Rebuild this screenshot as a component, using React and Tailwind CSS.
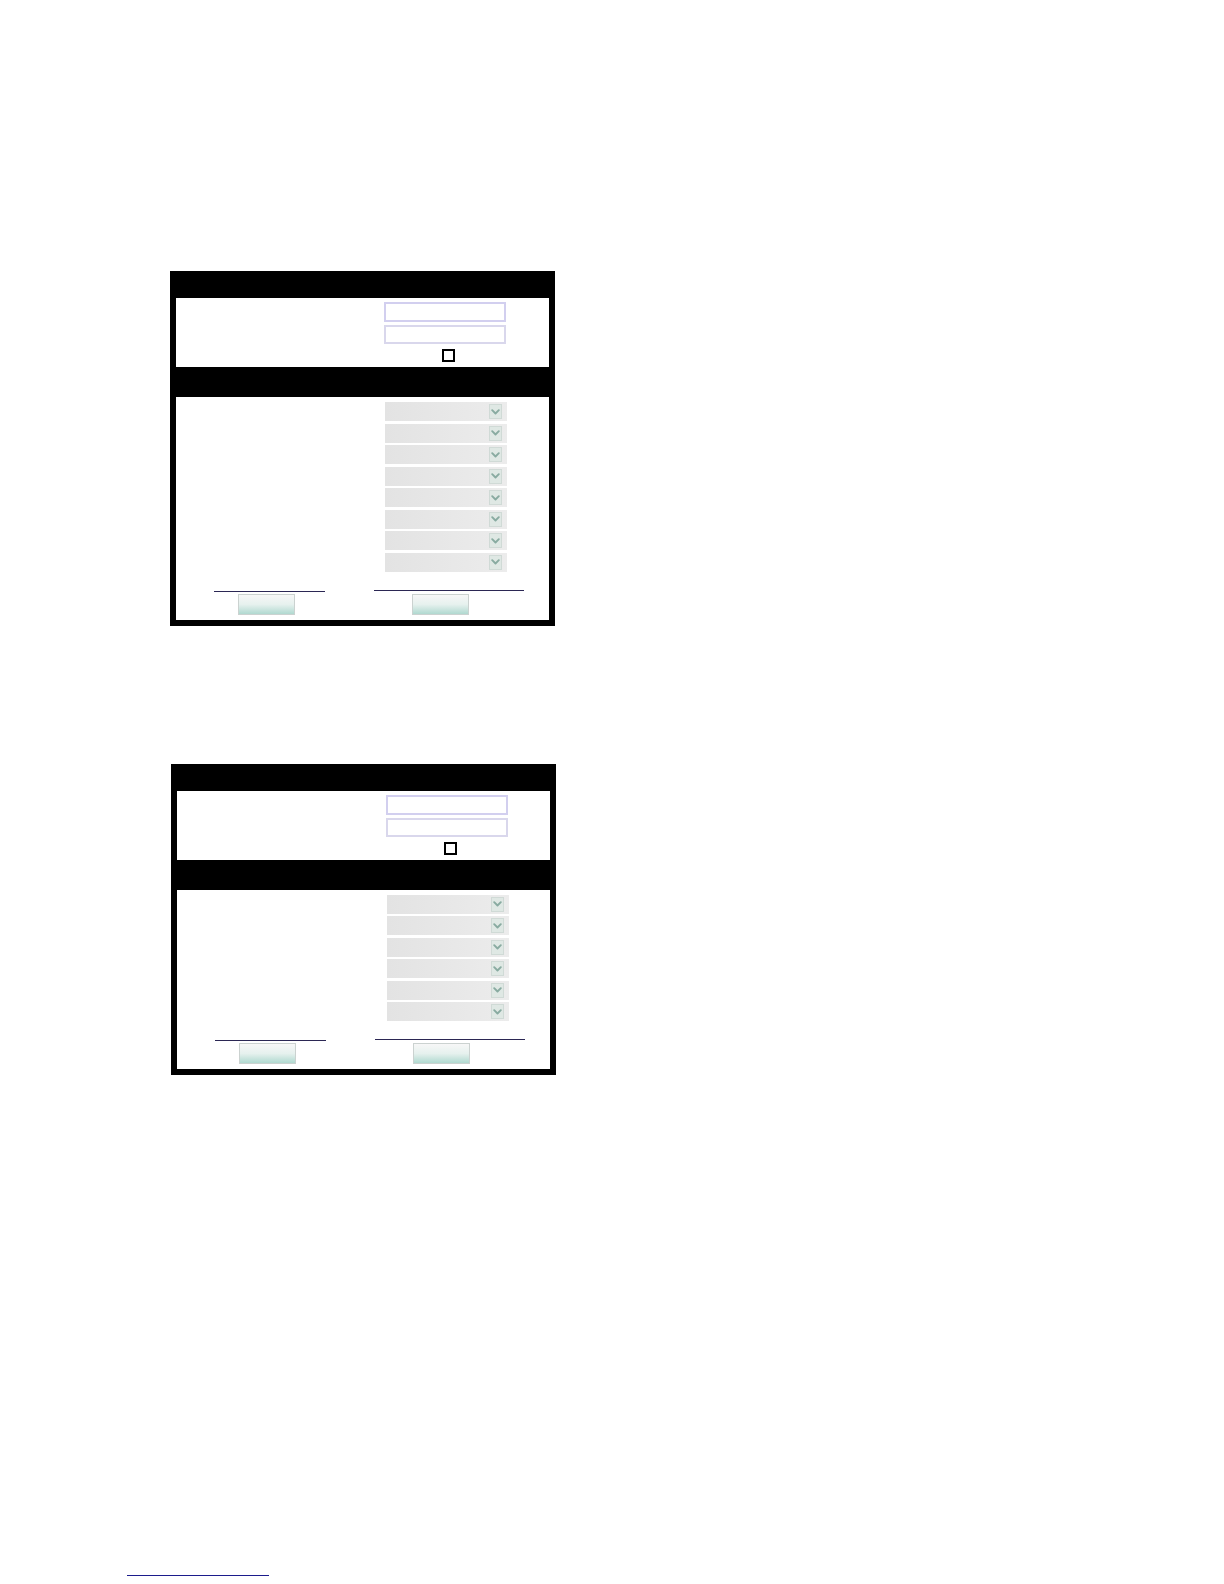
import React from 'react';

const Chevron = () => (
  <svg width="9" height="6" viewBox="0 0 9 6" fill="none">
    <path d="M1.2 1.2 L4.5 4.5 L7.8 1.2" stroke="#89aba1" strokeWidth="1.9" strokeLinecap="round" strokeLinejoin="round" />
  </svg>
);

function Select() {
  return (
    <div className="h-[19px] w-[122px] flex items-center justify-end pr-[5px] bg-linear-to-r from-[#e3e3e3] to-[#ececec]">
      <div className="w-[13px] h-[15px] flex items-center justify-center bg-[#dfe8e4] border border-[#d0dad6]">
        <Chevron />
      </div>
    </div>
  );
}

function Button() {
  return <div className="h-[21px] w-[57px] border border-[#cbd2d0] bg-linear-to-b from-[#f7f7f7] via-[#e6f1ee] to-[#b0d9d0]" />;
}

function Panel({ selects, ml, shift = 0 }) {
  return (
    <div className={`${ml} w-[385px] bg-black pt-[27px] px-[6px] pb-[6px]`}>
      <div className="bg-white h-[69px] flex flex-col pt-[4px]" style={{ paddingLeft: 208 + shift }}>
        <div className="h-[20px] w-[122px] border-2 border-[#d2cfef]" />
        <div className="h-[19px] w-[122px] mt-[3px] border-2 border-[#d9d7ec]" />
        <div className="w-[13px] h-[13px] mt-[5px] ml-[58px] border-2 border-black bg-white" />
      </div>
      <div className="h-[30px]" />
      <div className="bg-white flex flex-col pt-[5px] pb-[5px]">
        <div className="flex flex-col gap-[2.5px]" style={{ paddingLeft: 209 + shift }}>
          {Array.from({ length: selects }).map((_, i) => (
            <Select key={i} />
          ))}
        </div>
        <div className="flex items-end mt-[18px]">
          <div className="ml-[38px] w-[111px] flex flex-col">
            <div className="h-px bg-[#2b2754]" />
            <div className="ml-[24px] mt-[2px]"><Button /></div>
          </div>
          <div className="ml-[49px] w-[150px] flex flex-col">
            <div className="h-px bg-[#2b2754]" />
            <div className="ml-[38px] mt-[3px]"><Button /></div>
          </div>
        </div>
      </div>
    </div>
  );
}

export default function App() {
  return (
    <div className="w-[1224px] h-[1584px] bg-white flex flex-col" style={{ fontFamily: '"Liberation Sans", Arial, sans-serif' }}>
      <div className="h-[271px]" />
      <Panel selects={8} ml="ml-[170px]" />
      <div className="h-[138px]" />
      <Panel selects={6} ml="ml-[171px]" shift={1} />
      <div className="flex-1" />
      <div className="ml-[127px] w-[142px] h-px bg-[#1c1c8c] mb-[8px]" />
    </div>
  );
}
